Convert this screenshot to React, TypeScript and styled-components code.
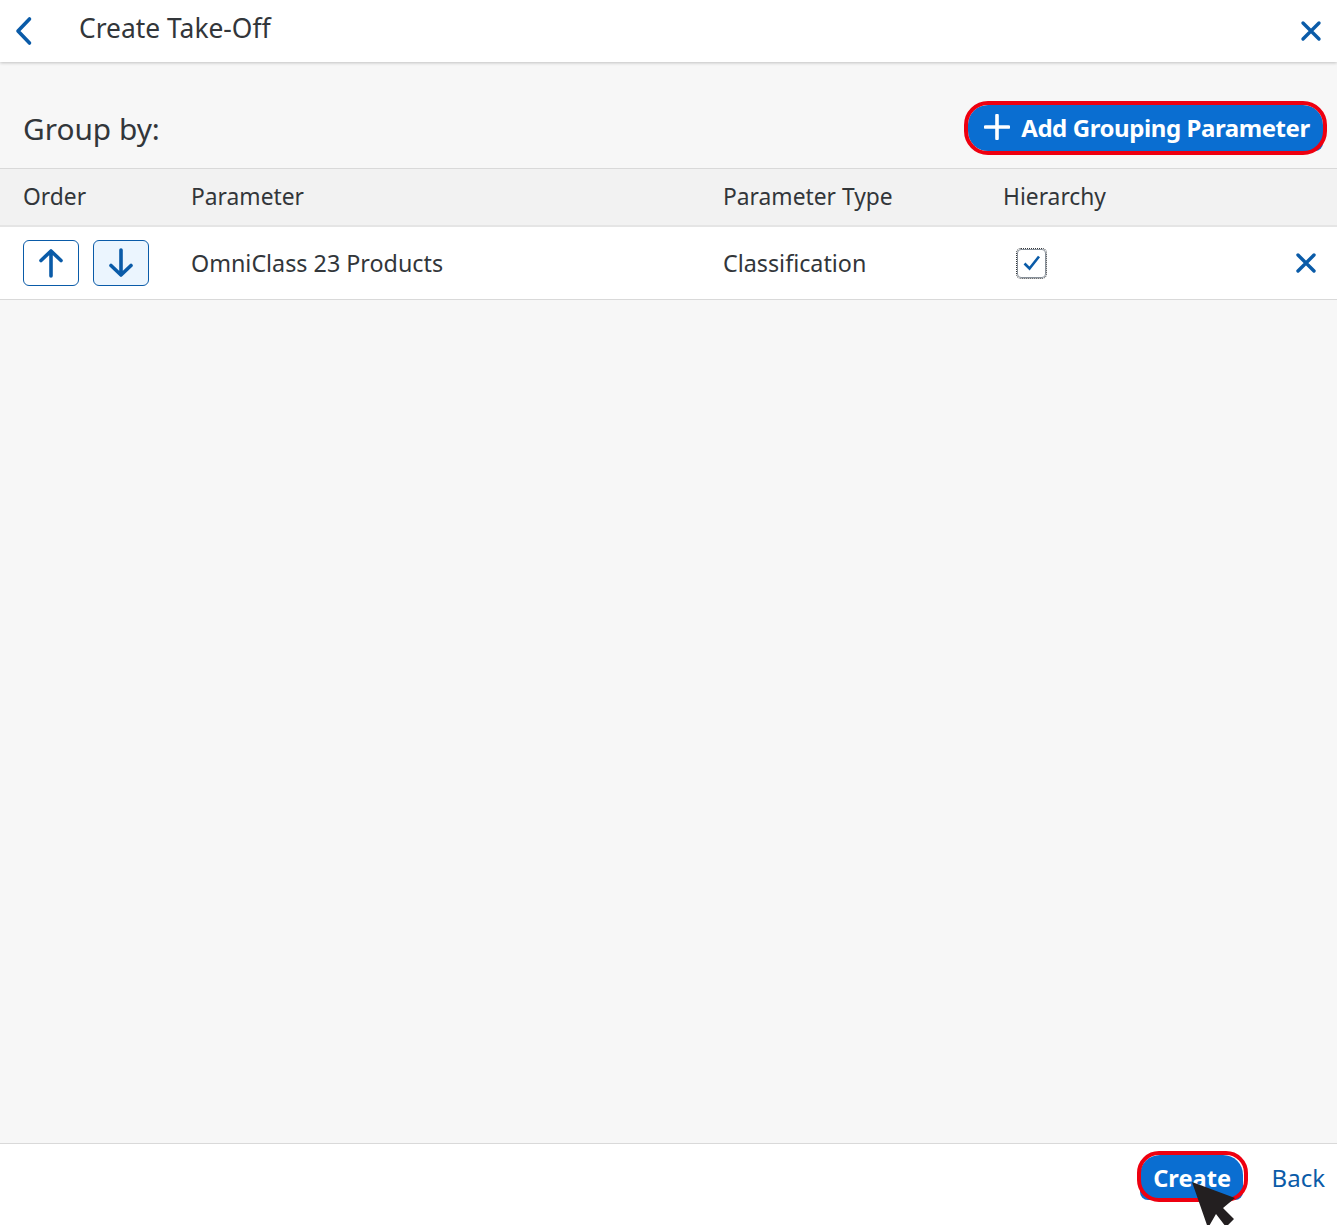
import React from 'react';
import styled, { createGlobalStyle } from 'styled-components';

const GlobalStyle = createGlobalStyle`
    html, body {
        margin: 0;
        padding: 0;
        background: #f7f7f7;
    }
    body {
        font-family: "Noto Sans", "Open Sans", "Liberation Sans", sans-serif;
        color: #32363a;
    }
`;

const Page = styled.div`
    height: 1225px;
    display: flex;
    flex-direction: column;
    overflow: hidden;
    position: relative;
`;

const Header = styled.header`
    height: 62px;
    flex: none;
    display: flex;
    align-items: center;
    background: #fff;
    box-shadow: 0 1px 3px rgba(0, 0, 0, 0.22);
    padding: 0 15px 0 14px;
    position: relative;
`;

const IconButton = styled.button`
    border: 0;
    background: none;
    padding: 0;
    display: flex;
    color: #0a5ba8;
`;

const Title = styled.h1`
    margin: 0 0 6px 45px;
    flex: 1;
    font-size: 26.4px;
    font-weight: 400;
    color: #32363a;
`;

const Main = styled.main`
    flex: 1;
`;

const Toolbar = styled.div`
    height: 106px;
    box-sizing: border-box;
    padding: 38px 14px 0 23px;
    display: flex;
    justify-content: space-between;
    align-items: flex-start;
`;

const GroupLabel = styled.h2`
    margin: 7px 0 0;
    font-size: 29.8px;
    line-height: 44px;
    font-weight: 400;
    color: #32363a;
`;

const Emphasized = styled.button`
    position: relative;
    border: 0;
    background: #0a6ed1;
    color: #fff;
    font-family: inherit;
    font-weight: 700;
    font-size: 24px;
    display: flex;
    align-items: center;
    justify-content: center;
    &::after {
        content: '';
        position: absolute;
        border: 4px solid #ee0010;
        border-radius: 24px;
    }
`;

const AddButton = styled(Emphasized)`
    width: 355px;
    height: 46px;
    margin-top: 5px;
    gap: 11px;
    padding: 0 0 2px 3px;
    border-radius: 20px 20px 8px 20px;
    letter-spacing: -0.42px;
    &::after {
        inset: -4px;
    }
`;

const Row = styled.div`
    display: grid;
    grid-template-columns: 168px 532px 280px 1fr 42px;
    align-items: center;
    padding: 0 0 2px 23px;
    color: #32363a;
`;

const HeadRow = styled(Row)`
    height: 59px;
    box-sizing: border-box;
    font-size: 22.8px;
    background: #f2f2f2;
    border-top: 1px solid #d9d9d9;
    border-bottom: 2px solid #e5e5e5;
`;

const BodyRow = styled(Row)`
    height: 73px;
    box-sizing: border-box;
    padding-bottom: 0;
    font-size: 23.3px;
    background: #fff;
    border-bottom: 1px solid #d9d9d9;
`;

const BodyText = styled.span`
    margin-bottom: 1px;
`;

const OrderCell = styled.div`
    display: flex;
    gap: 14px;
`;

const OrderButton = styled.button<{ $active?: boolean }>`
    width: 56px;
    height: 46px;
    padding: 0;
    display: flex;
    align-items: center;
    justify-content: center;
    border: 1px solid #0a5ba8;
    border-radius: 6px;
    color: #0a5ba8;
    background: ${(p) => (p.$active ? '#ebf5fe' : '#fff')};
`;

const CheckBox = styled.span`
    width: 27px;
    height: 27px;
    margin: 0 0 0 14px;
    display: flex;
    align-items: center;
    justify-content: center;
    border: 1px solid #89919a;
    border-radius: 4px;
    outline: 1px dotted #32363a;
    background: #fff;
    color: #0a5ba8;
`;

const Footer = styled.footer`
    height: 82px;
    flex: none;
    box-sizing: border-box;
    display: flex;
    align-items: flex-start;
    justify-content: flex-end;
    gap: 29px;
    padding: 11px 12px 0 0;
    background: #fff;
    border-top: 1px solid #d9d9d9;
`;

const CreateButton = styled(Emphasized)`
    width: 103px;
    height: 45px;
    padding: 0 0 0 2px;
    border-radius: 20px 20px 8px 8px;
    font-size: 23.6px;
    &::after {
        inset: -4px -5px -2px -3px;
        border-radius: 22px;
    }
`;

const BackLink = styled.a`
    font-size: 24px;
    line-height: 46px;
    color: #0a5ba8;
`;

const Cursor = styled.svg`
    position: absolute;
    left: 1190px;
    top: 1181px;
`;

function CloseIcon() {
    return (
        <svg width="22" height="22" viewBox="0 0 22 22" fill="none" stroke="currentColor" strokeWidth="3.4" strokeLinecap="round">
            <path d="M3 3 19 19M19 3 3 19" />
        </svg>
    );
}

export default function App() {
    return (
        <Page>
            <GlobalStyle />
            <Header>
                <IconButton aria-label="Back">
                    <svg width="20" height="30" viewBox="0 0 20 30" fill="none" stroke="currentColor" strokeWidth="3.6" strokeLinecap="round" strokeLinejoin="round">
                        <path d="M15.5 3 4 15 15.5 27" />
                    </svg>
                </IconButton>
                <Title>Create Take-Off</Title>
                <IconButton aria-label="Close">
                    <CloseIcon />
                </IconButton>
            </Header>
            <Main>
                <Toolbar>
                    <GroupLabel>Group by:</GroupLabel>
                    <AddButton>
                        <svg width="26" height="26" viewBox="0 0 26 26" fill="none" stroke="currentColor" strokeWidth="3.6" strokeLinecap="round">
                            <path d="M13 1.5V24.5M1.5 13H24.5" />
                        </svg>
                        Add Grouping Parameter
                    </AddButton>
                </Toolbar>
                <HeadRow>
                    <span>Order</span>
                    <span>Parameter</span>
                    <span>Parameter Type</span>
                    <span>Hierarchy</span>
                </HeadRow>
                <BodyRow>
                    <OrderCell>
                        <OrderButton aria-label="Move up">
                            <svg width="24" height="30" viewBox="0 0 24 30" fill="none" stroke="currentColor" strokeWidth="3.6" strokeLinecap="round" strokeLinejoin="round">
                                <path d="M12 3V28M2 12.5 12 3 22 12.5" />
                            </svg>
                        </OrderButton>
                        <OrderButton $active aria-label="Move down">
                            <svg width="24" height="30" viewBox="0 0 24 30" fill="none" stroke="currentColor" strokeWidth="3.6" strokeLinecap="round" strokeLinejoin="round">
                                <path d="M12 2V27M2 17.5 12 27 22 17.5" />
                            </svg>
                        </OrderButton>
                    </OrderCell>
                    <BodyText>OmniClass 23 Products</BodyText>
                    <BodyText>Classification</BodyText>
                    <span>
                        <CheckBox>
                            <svg width="18" height="16" viewBox="0 0 18 16" fill="none" stroke="currentColor" strokeWidth="2.6">
                                <path d="M1.5 8.5 6.5 13.5 16 1.5" />
                            </svg>
                        </CheckBox>
                    </span>
                    <IconButton aria-label="Remove">
                        <CloseIcon />
                    </IconButton>
                </BodyRow>
            </Main>
            <Footer>
                <CreateButton>Create</CreateButton>
                <BackLink>Back</BackLink>
            </Footer>
            <Cursor width="48" height="48" viewBox="0 0 48 48">
                <path d="M2 1 45 17 33 27 44 38 36 46 26 33 18 47Z" fill="#231f20" />
            </Cursor>
        </Page>
    );
}
